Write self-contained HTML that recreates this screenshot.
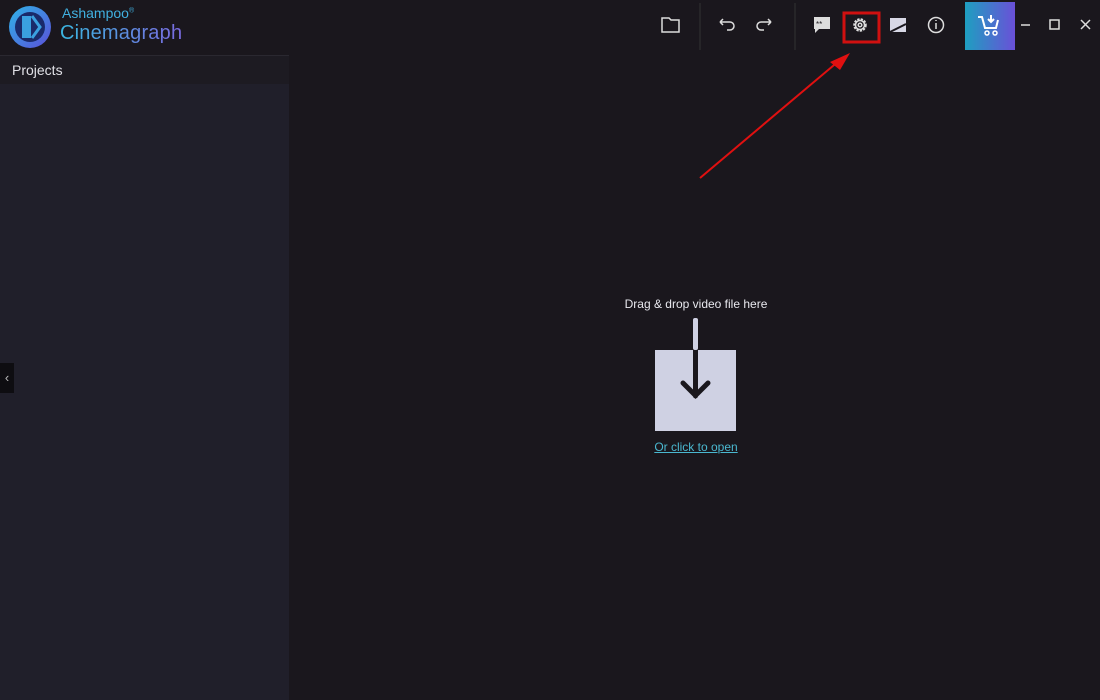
<!DOCTYPE html><html><head><style>
body{margin:0;width:1100px;height:700px;background:#1a171d;font-family:"Liberation Sans",sans-serif;position:relative;overflow:hidden;color:#ddd}
.a{position:absolute}
</style></head><body>
<div class="a" style="left:0;top:55px;width:289px;height:1px;background:#2a2830"></div>
<div class="a" style="left:0;top:56px;width:289px;height:28px;background:#1d1b22"></div>
<div class="a" style="left:12px;top:62px;font-size:14px;color:#e0e0e6">Projects</div>
<div class="a" style="left:0;top:84px;width:289px;height:616px;background:#201f2a"></div>
<div class="a" style="left:0;top:363px;width:14px;height:30px;background:#0e0d11;color:#bbb;font-size:13px;line-height:30px;text-align:center">‹</div>
<svg class="a" style="left:7px;top:4px" width="46" height="46" viewBox="0 0 46 46"><defs><linearGradient id="g" x1="0" y1="0" x2="1" y2="1"><stop offset="0" stop-color="#2fb4e8"/><stop offset="1" stop-color="#5a4fd8"/></linearGradient></defs><circle cx="23" cy="23" r="21" fill="url(#g)"/><circle cx="23" cy="23" r="15" fill="#1a2a6a"/><rect x="15" y="12" width="9" height="22" fill="#3aa0e0"/><path d="M25 12 L33 23 L25 34" stroke="#3aa0e0" stroke-width="3" fill="none"/></svg>
<div class="a" style="left:62px;top:5px;font-size:14px;color:#40b0e0">Ashampoo<sup style="font-size:7px">®</sup></div>
<div class="a" style="left:60px;top:22px;font-size:20px;letter-spacing:0.2px;background:linear-gradient(90deg,#3ab6e0,#7a6ae0);-webkit-background-clip:text;color:transparent">Cinemagraph</div>
<svg class="a" style="left:650px;top:0" width="450" height="55" fill="none" stroke="#ddd" stroke-width="1.5">
<path d="M12 18h7l2 2h8v12H12z"/>
<line x1="50" y1="3" x2="50" y2="50" stroke="#333" stroke-width="1"/>
<path d="M70 22l3-3M70 22l3 3M70 22h10a4 4 0 0 1 0 8h-3"/>
<path d="M121 22l-3-3M121 22l-3 3M121 22h-10a4 4 0 0 0 0 8h3"/>
<line x1="145" y1="3" x2="145" y2="50" stroke="#333" stroke-width="1"/>
<path d="M164 17h16v12h-11l-4 4v-4h-1z" fill="#ddd" stroke="none"/>
<text x="166" y="27" fill="#1a171d" stroke="none" font-size="8">**</text>
<rect x="194" y="13" width="35" height="29" stroke="#d01010" stroke-width="3"/>
<circle cx="210" cy="25" r="5.5" stroke-dasharray="2.2 1.1" stroke-width="2.5"/><circle cx="210" cy="25" r="4.5"/><circle cx="210" cy="25" r="1.8"/>
<rect x="240" y="18" width="16" height="14" fill="#d8d8e6" stroke="none"/><path d="M240 32L256 24" stroke="#1a171d" stroke-width="2"/>
<circle cx="286" cy="25" r="7.5"/><path d="M286 23v6M286 20v1"/>
<rect x="315" y="2" width="50" height="48" fill="url(#c)" stroke="none"/>
<defs><linearGradient id="c"><stop offset="0" stop-color="#1e9fc0"/><stop offset="1" stop-color="#6a50d8"/></linearGradient></defs>
<path d="M328 17h4l3 11h11l2-8M341 15v7M338 19l3 3 3-3" stroke="#fff" stroke-width="2"/><circle cx="337" cy="33" r="2" stroke="#fff"/><circle cx="345" cy="33" r="2" stroke="#fff"/>
<path d="M371 25h9"/><rect x="400" y="20" width="9" height="9"/><path d="M431 20l9 9M440 20l-9 9"/>
</svg>
<svg class="a" style="left:690px;top:50px" width="170" height="135"><path d="M10 128L150 10" stroke="#e01010" stroke-width="2"/><path d="M160 3L140 12L150 20z" fill="#e01010"/></svg>
<div class="a" style="left:596px;top:297px;width:200px;text-align:center;font-size:12px;color:#e8e8ee">Drag &amp; drop video file here</div>
<div class="a" style="left:655px;top:350px;width:81px;height:81px;background:#cfd1e3"></div>
<div class="a" style="left:693px;top:318px;width:5px;height:32px;background:#cfd1e3;border-radius:2px"></div>
<svg class="a" style="left:655px;top:350px" width="81" height="81"><path d="M40.5 0v46M28 33l12.5 12.5L53 33" stroke="#1a171d" stroke-width="5" fill="none" stroke-linecap="round"/></svg>
<div class="a" style="left:596px;top:440px;width:200px;text-align:center;font-size:12px;color:#4ab8d0;text-decoration:underline">Or click to open</div>
</body></html>
